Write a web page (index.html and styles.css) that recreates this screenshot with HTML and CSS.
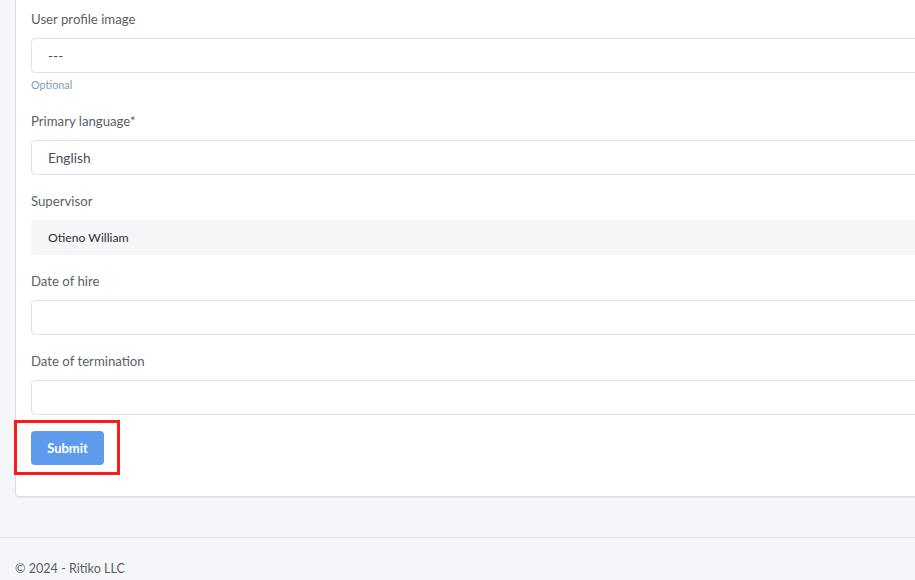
FILE: index.html
```html
<!DOCTYPE html>
<html lang="en">
<head>
<meta charset="utf-8">
<title>Edit user</title>
<link rel="stylesheet" href="styles.css">
</head>
<body>
<div class="page">
  <div class="content">
    <div class="card">
      <form class="card-body">
        <div class="form-group">
          <label class="form-label">User profile image</label>
          <div class="form-control">---</div>
          <small class="help">Optional</small>
        </div>
        <div class="form-group">
          <label class="form-label">Primary language*</label>
          <div class="form-control">English</div>
        </div>
        <div class="form-group">
          <label class="form-label">Supervisor</label>
          <div class="form-control readonly">Otieno William</div>
        </div>
        <div class="form-group">
          <label class="form-label">Date of hire</label>
          <div class="form-control"></div>
        </div>
        <div class="form-group">
          <label class="form-label">Date of termination</label>
          <div class="form-control"></div>
        </div>
        <div class="actions">
          <span class="btn-wrap">
            <button type="button" class="btn">Submit</button>
            <span class="highlight"></span>
          </span>
        </div>
      </form>
    </div>
  </div>
  <footer class="footer">© 2024 - Ritiko LLC</footer>
</div>
</body>
</html>
```
FILE: styles.css
```css
* { box-sizing: border-box; }
html, body { margin: 0; padding: 0; }
body {
  background: #f4f6f9;
  font-family: "Lato", "Noto Sans", sans-serif;
  font-size: 13.2px;
  color: #555b61;
  overflow: hidden;
  width: 915px;
  height: 580px;
}
.page { width: 915px; overflow: hidden; }
.content { padding: 0 0 0 15px; }
.card {
  width: 1000px;
  margin-top: -20px;
  background: #fff;
  border: 1px solid #d7dde2;
  border-radius: 4px;
  box-shadow: 0 1px 1px rgba(0,0,0,0.06);
}
.card-body { padding: 28px 15px 15px 15px; display: flex; flex-direction: column; }
.form-group { display: flex; flex-direction: column; margin-bottom: 16px; }
.form-label { line-height: 21px; margin-bottom: 8px; color: #5a5f66; font-size: 13.2px; }
.form-control {
  height: 35px;
  border: 1px solid #dde3e6;
  border-radius: 4px;
  padding: 0 16px;
  display: flex;
  align-items: center;
  color: #495057;
  background: #fff;
  font-size: 13.7px;
}
.form-control.readonly {
  background: #f5f6f8;
  border-color: #f5f6f8;
  color: #2c2e33;
  font-size: 12.2px;
}
.help {
  margin-top: 2px;
  font-size: 10.8px;
  line-height: 20px;
  color: #7f9db2;
}
.actions { display: flex; margin-bottom: 16px; }
.btn-wrap { position: relative; display: inline-flex; }
.btn {
  width: 73px;
  height: 34px;
  border: none;
  border-radius: 4px;
  background: #5e9bed;
  color: #fff;
  font-family: inherit;
  font-size: 13px;
  font-weight: 700;
  padding: 0;
}
.highlight {
  position: absolute;
  top: -11px;
  left: -17px;
  right: -16px;
  bottom: -10px;
  border: 3px solid #ff1a1a;
}
.footer {
  margin-top: 40px;
  border-top: 1px solid #dee2e6;
  padding: 20px 15px;
  line-height: 21px;
  color: #595f66;
  font-size: 12.6px;
}
```
